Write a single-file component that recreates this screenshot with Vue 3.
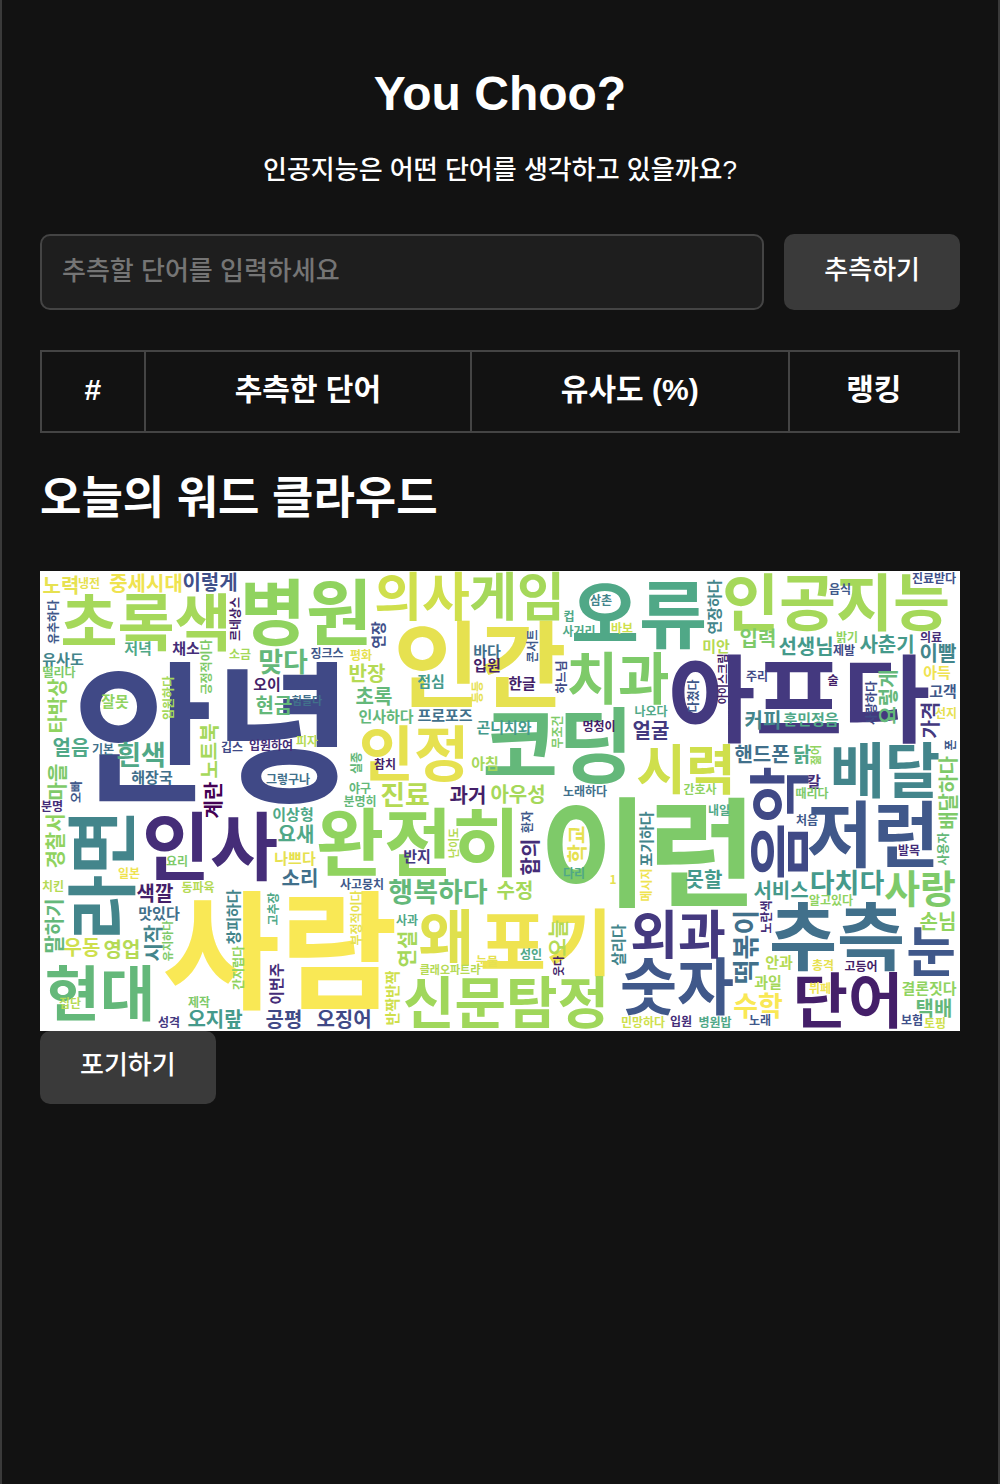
<script setup>
import { ref } from 'vue'

const guess = ref('')
const columns = [
  { label: '#', key: 'index' },
  { label: '추측한 단어', key: 'word' },
  { label: '유사도 (%)', key: 'score' },
  { label: '랭킹', key: 'rank' }
]

// Each entry: word, centre x, centre y, font size, colour
const horizontal = [
  ['안녕', 173, 161, 152, '#404986'],
  ['사람', 240, 379, 128, '#f9e855'],
  ['이런', 608, 281, 118, '#7eca69'],
  ['아프다', 759, 128, 95, '#44397f'],
  ['인간', 440, 93, 94, '#e6e150'],
  ['코딩', 518, 174, 82, '#64b87a'],
  ['오류', 599, 43, 74, '#50a887'],
  ['인사', 170, 275, 74, '#452d78'],
  ['추측', 797, 365, 74, '#41708b'],
  ['완전히', 378, 271, 74, '#90d35f'],
  ['포기', 506, 371, 72, '#efe350'],
  ['병원', 266, 41, 72, '#90d35f'],
  ['저런', 833, 263, 72, '#40588a'],
  ['초록색', 106, 51, 62, '#a5d85a'],
  ['인공지능', 796, 31, 62, '#a5d85a'],
  ['숫자', 637, 415, 62, '#40588a'],
  ['왜', 406, 366, 60, '#dfe04d'],
  ['인정', 374, 182, 60, '#e6e150'],
  ['배달', 845, 199, 60, '#43858b'],
  ['현대', 60, 422, 60, '#64b87a'],
  ['단어', 808, 429, 60, '#441f69'],
  ['치과', 578, 107, 56, '#7eca69'],
  ['신문탐정', 466, 431, 56, '#a0d75b'],
  ['시력', 646, 198, 54, '#cfdf4c'],
  ['눈', 891, 380, 54, '#40588a'],
  ['의사', 382, 25, 52, '#cfdf4c'],
  ['게임', 477, 25, 52, '#a5d85a'],
  ['외과', 638, 363, 52, '#44397f'],
  ['사랑', 880, 317, 39, '#7eca69'],
  ['흰색', 101, 184, 27, '#50a887'],
  ['맞다', 243, 91, 27, '#64b87a'],
  ['진료', 365, 224, 27, '#b5da54'],
  ['행복하다', 398, 321, 27, '#64b87a'],
  ['다치다', 807, 312, 27, '#459a8b'],
  ['수학', 718, 435, 27, '#f9e855'],
  ['노력', 21, 14, 20, '#e6e150'],
  ['중세시대', 106, 12, 20, '#efe350'],
  ['이렇게', 170, 11, 20, '#40508a'],
  ['얼음', 31, 176, 20, '#50a887'],
  ['현금', 234, 134, 20, '#64b87a'],
  ['반장', 327, 102, 20, '#b5da54'],
  ['초록', 334, 125, 20, '#64b87a'],
  ['과거', 428, 224, 20, '#441f69'],
  ['아우성', 478, 223, 20, '#a5d85a'],
  ['얼굴', 611, 159, 20, '#44397f'],
  ['입력', 718, 67, 20, '#7eca69'],
  ['선생님', 766, 75, 20, '#459a8b'],
  ['사춘기', 847, 73, 20, '#459a8b'],
  ['이빨', 898, 82, 20, '#43858b'],
  ['커피', 723, 149, 20, '#43858b'],
  ['핸드폰', 722, 183, 20, '#41708b'],
  ['닭', 762, 183, 20, '#50a887'],
  ['색깔', 115, 322, 20, '#441f69'],
  ['우동', 42, 376, 20, '#cfdf4c'],
  ['영업', 82, 378, 20, '#b5da54'],
  ['오지랖', 175, 448, 20, '#459a8b'],
  ['공평', 244, 448, 20, '#404986'],
  ['요새', 256, 263, 20, '#50a887'],
  ['소리', 260, 307, 20, '#41708b'],
  ['수정', 475, 319, 20, '#a5d85a'],
  ['오징어', 304, 448, 20, '#404986'],
  ['못할', 664, 308, 20, '#459a8b'],
  ['서비스', 741, 319, 20, '#459a8b'],
  ['손님', 898, 350, 20, '#90d35f'],
  ['택배', 894, 437, 20, '#64b87a'],
  ['저녁', 98, 77, 15, '#50a887'],
  ['채소', 146, 77, 15, '#452d78'],
  ['유사도', 23, 88, 15, '#43858b'],
  ['잘못', 75, 130, 15, '#90d35f'],
  ['해장국', 112, 206, 15, '#41708b'],
  ['오이', 227, 113, 15, '#441f69'],
  ['점심', 391, 110, 15, '#459a8b'],
  ['바다', 447, 80, 15, '#41708b'],
  ['입원', 447, 94, 15, '#441f69'],
  ['인사하다', 346, 145, 15, '#64b87a'],
  ['프로포즈', 405, 144, 15, '#41708b'],
  ['아침', 445, 192, 15, '#a5d85a'],
  ['곤니치와', 464, 156, 15, '#459a8b'],
  ['미안', 676, 75, 15, '#b5da54'],
  ['한글', 482, 112, 15, '#441f69'],
  ['아득', 897, 101, 15, '#efe350'],
  ['고객', 903, 120, 15, '#40588a'],
  ['훈민정음', 771, 148, 15, '#50a887'],
  ['칼', 774, 210, 15, '#452d78'],
  ['맛있다', 119, 342, 15, '#41708b'],
  ['이상형', 253, 243, 15, '#50a887'],
  ['나쁘다', 255, 287, 15, '#e6e150'],
  ['반지', 377, 285, 15, '#44397f'],
  ['안과', 739, 391, 15, '#b5da54'],
  ['과일', 728, 411, 15, '#a5d85a'],
  ['결론짓다', 889, 417, 15, '#90d35f'],
  ['냉전', 49, 12, 12, '#e6e150'],
  ['소금', 200, 83, 12, '#a5d85a'],
  ['떨리다', 19, 101, 12, '#7eca69'],
  ['기본', 63, 178, 12, '#41708b'],
  ['깁스', 192, 176, 12, '#404986'],
  ['입원하여', 231, 174, 12, '#452d78'],
  ['분명', 12, 235, 12, '#452d78'],
  ['그렇구나', 248, 208, 12, '#41708b'],
  ['징크스', 287, 82, 12, '#40588a'],
  ['평화', 321, 84, 12, '#e6e150'],
  ['힘들다', 267, 130, 11, '#41708b'],
  ['피자', 267, 170, 12, '#b5da54'],
  ['참치', 345, 193, 12, '#441f69'],
  ['야구', 320, 217, 12, '#64b87a'],
  ['분명히', 320, 230, 12, '#64b87a'],
  ['컵', 529, 45, 12, '#50a887'],
  ['사거리', 539, 60, 12, '#50a887'],
  ['삼촌', 561, 29, 12, '#43858b'],
  ['바보', 582, 57, 12, '#cfdf4c'],
  ['나오다', 611, 140, 12, '#50a887'],
  ['멍청이', 559, 155, 12, '#441f69'],
  ['노래하다', 545, 220, 12, '#41708b'],
  ['간호사', 660, 218, 12, '#90d35f'],
  ['음식', 800, 18, 12, '#40588a'],
  ['진료받다', 894, 7, 12, '#40508a'],
  ['밝기', 807, 66, 12, '#90d35f'],
  ['제발', 804, 79, 12, '#404986'],
  ['의료', 891, 66, 12, '#452d78'],
  ['주리', 717, 105, 12, '#404986'],
  ['술', 793, 109, 12, '#441f69'],
  ['선지', 906, 142, 12, '#e6e150'],
  ['때리다', 772, 222, 12, '#7eca69'],
  ['요리', 137, 290, 12, '#7eca69'],
  ['일본', 89, 302, 12, '#efe350'],
  ['동파육', 158, 316, 12, '#b5da54'],
  ['치킨', 13, 315, 12, '#b5da54'],
  ['집단', 30, 432, 12, '#b5da54'],
  ['제작', 159, 431, 12, '#7eca69'],
  ['성격', 129, 451, 12, '#44397f'],
  ['사고뭉치', 322, 313, 12, '#40588a'],
  ['사과', 367, 349, 12, '#50a887'],
  ['눈물', 447, 390, 12, '#e6e150'],
  ['클래오파트라', 410, 399, 11, '#b5da54'],
  ['다리', 534, 302, 12, '#50a887'],
  ['1', 573, 308, 12, '#e6e150'],
  ['내일', 679, 239, 12, '#50a887'],
  ['성인', 491, 383, 12, '#50a887'],
  ['민망하다', 603, 451, 12, '#cfdf4c'],
  ['입원', 641, 450, 12, '#452d78'],
  ['병원밥', 675, 451, 12, '#50a887'],
  ['처음', 767, 249, 12, '#40588a'],
  ['발목', 869, 279, 12, '#452d78'],
  ['알고있다', 791, 329, 12, '#90d35f'],
  ['총격', 783, 394, 12, '#e6e150'],
  ['고등어', 821, 395, 12, '#441f69'],
  ['뷔페', 780, 417, 12, '#efe350'],
  ['노래', 720, 449, 12, '#40588a'],
  ['보험', 872, 449, 12, '#40508a'],
  ['토핑', 895, 452, 12, '#cfdf4c']
]

const vertical = [
  ['라면', 61, 304, 71, '#43858b'],
  ['음악', 739, 252, 62, '#404986'],
  ['떡볶이', 706, 376, 27, '#41708b'],
  ['타박상', 17, 135, 20, '#90d35f'],
  ['노트북', 169, 180, 20, '#a5d85a'],
  ['마을', 17, 211, 20, '#7eca69'],
  ['계란', 173, 229, 20, '#440154'],
  ['요렇게', 848, 126, 20, '#64b87a'],
  ['가격', 890, 149, 20, '#44397f'],
  ['배달하다', 908, 222, 20, '#7eca69'],
  ['경찰서', 15, 270, 20, '#90d35f'],
  ['말하기', 14, 355, 20, '#64b87a'],
  ['시작', 113, 372, 20, '#43858b'],
  ['연설', 367, 378, 20, '#a5d85a'],
  ['합의', 490, 286, 20, '#452d78'],
  ['학교', 537, 273, 20, '#e6e150'],
  ['오늘', 518, 367, 20, '#b5da54'],
  ['연장', 338, 64, 15, '#40508a'],
  ['연장하다', 674, 36, 15, '#43858b'],
  ['창피하다', 193, 346, 15, '#43858b'],
  ['이번주', 236, 413, 15, '#452d78'],
  ['반짝반짝', 352, 427, 15, '#cfdf4c'],
  ['포기하다', 606, 268, 15, '#43858b'],
  ['살리다', 578, 374, 15, '#43858b'],
  ['유추하다', 13, 51, 12, '#40588a'],
  ['르네상스', 195, 48, 12, '#441f69'],
  ['입원하다', 128, 127, 12, '#a5d85a'],
  ['긍정적이다', 166, 96, 12, '#7eca69'],
  ['오빠', 36, 221, 12, '#40588a'],
  ['등등', 437, 121, 12, '#e6e150'],
  ['실종', 316, 192, 12, '#64b87a'],
  ['콘서트', 492, 75, 12, '#40588a'],
  ['하느님', 521, 106, 12, '#404986'],
  ['무조건', 517, 161, 12, '#7eca69'],
  ['다쳤다', 653, 125, 12, '#40588a'],
  ['아이스크림', 683, 108, 11, '#441f69'],
  ['사랑하다', 831, 132, 12, '#404986'],
  ['젊어', 776, 184, 11, '#90d35f'],
  ['폰', 910, 174, 12, '#40588a'],
  ['유지하다', 128, 370, 11, '#7eca69'],
  ['간지럽다', 198, 397, 12, '#90d35f'],
  ['고추장', 233, 338, 12, '#50a887'],
  ['난이도', 414, 272, 11, '#b5da54'],
  ['부정적이다', 316, 347, 12, '#e6e150'],
  ['환자', 487, 251, 12, '#40588a'],
  ['메시지', 606, 314, 12, '#efe350'],
  ['웃다', 519, 395, 11, '#441f69'],
  ['사용자', 903, 278, 12, '#64b87a'],
  ['노란색', 726, 346, 12, '#452d78']
]

const cloud = [
  ...horizontal.map((w) => [...w, 0]),
  ...vertical.map((w) => [...w, -90])
].map(([text, x, y, size, fill, angle]) => ({
  text,
  size,
  fill,
  place: `translate(${x} ${y}) rotate(${angle})`
}))
</script>

<template>
  <main class="page">
    <header class="intro">
      <h1>You Choo?</h1>
      <p>인공지능은 어떤 단어를 생각하고 있을까요?</p>
    </header>

    <form class="guess" @submit.prevent>
      <input v-model="guess" type="text" aria-label="추측할 단어" placeholder="추측할 단어를 입력하세요" />
      <button type="submit">추측하기</button>
    </form>

    <table class="results">
      <thead>
        <tr>
          <th v-for="c in columns" :key="c.key" :class="c.key" scope="col">{{ c.label }}</th>
        </tr>
      </thead>
    </table>

    <section>
      <h2>오늘의 워드 클라우드</h2>
      <svg class="cloud" viewBox="0 0 920 460">
        <text
          v-for="(w, i) in cloud"
          :key="i"
          dy="0.38em"
          :transform="w.place"
          :font-size="w.size"
          :fill="w.fill"
        >{{ w.text }}</text>
      </svg>
      <button type="button">포기하기</button>
    </section>
  </main>
</template>

<style>
body {
  margin: 0;
  background: #121212;
}
</style>

<style scoped>
.page {
  box-sizing: border-box;
  min-height: 100vh;
  padding: 66px 38px 40px;
  border: solid #3a3a3a;
  border-width: 0 2px;
  background: #121212;
  color: #fff;
  font-family: "Liberation Sans", "Noto Sans CJK KR", sans-serif;
  font-weight: 500;
}

.intro {
  text-align: center;
}

h1 {
  margin: 0;
  font-size: 48px;
  line-height: 56px;
}

.intro p {
  margin: 28px 0 44px;
  font-size: 26px;
  line-height: 40px;
}

.guess {
  display: flex;
  gap: 20px;
  margin-bottom: 40px;
}

input {
  box-sizing: border-box;
  flex: 1;
  min-width: 0;
  height: 76px;
  padding: 0 20px 2px;
  border: 2px solid #444;
  border-radius: 10px;
  background: #1e1e1e;
  color: #fff;
  font: inherit;
  font-size: 26px;
}

input::placeholder {
  color: #757575;
}

button {
  padding: 16px 40px 20px;
  border: 0;
  border-radius: 10px;
  background: #3a3a3a;
  color: #fff;
  font: inherit;
  font-size: 26px;
  line-height: 37px;
}

.results {
  width: 100%;
  border-collapse: collapse;
  table-layout: fixed;
}

th {
  padding: 18px 0 21px;
  border: 2px solid #444;
  font-size: 30px;
  line-height: 40px;
}

.index {
  width: 11.2%;
}

.word {
  width: 35.6%;
}

.score {
  width: 34.7%;
}

.rank {
  width: 18.5%;
}

h2 {
  margin: 36px 0 42px;
  font-size: 45px;
  line-height: 60px;
}

.cloud {
  display: block;
  width: 100%;
  background: #fff;
  font-family: "Noto Sans CJK KR", sans-serif;
  font-weight: 700;
  text-anchor: middle;
}
</style>
